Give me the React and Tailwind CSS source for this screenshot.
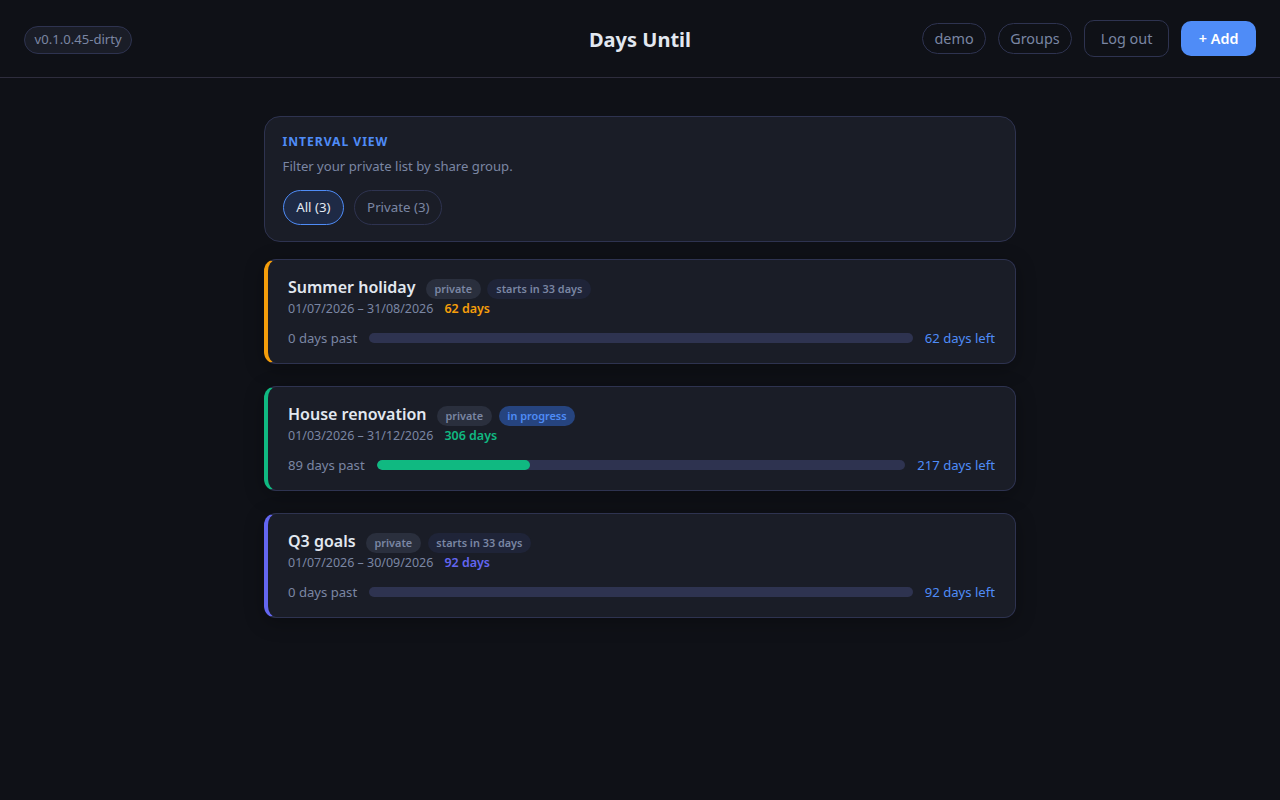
function Tag({ children, tone }) {
  const cls = tone === "private"
    ? "bg-[#2a2f3d] text-[#7a86a3]"
    : tone === "active"
    ? "bg-[#26447f] text-[#4f8cf7]"
    : "bg-[#1f2438] text-[#7a86a3]";
  return <span className={`rounded-full px-[8.8px] h-[19.5px] mt-[4px] flex items-center text-[10.88px] font-semibold leading-none ${cls}`}>{children}</span>;
}
function Card({ title, tags, dates, days, accent, accentText, past, left, pct }) {
  return (
    <div className={`rounded-[12px] border border-[#2e3350] border-l-4 ${accent} bg-[#1a1d27] px-5 pt-[16px] h-[105px] shadow-[0_4px_20px_rgba(0,0,0,0.3)]`}>
      <div className="flex items-center gap-[6.6px] h-[22px]">
        <span className="text-base font-semibold text-[#e2e8f0] leading-[22px] mr-[3.5px]">{title}</span>
        {tags.map((t) => <Tag key={t[0]} tone={t[1]}>{t[0]}</Tag>)}
      </div>
      <div className="flex items-center gap-[11px] text-[12.48px] leading-[18px] mt-[2px] text-[#7a86a3]">
        <span>{dates}</span>
        <span className={`font-semibold ${accentText}`}>{days}</span>
      </div>
      <div className="flex items-center gap-3 mt-[11px] text-[13.12px] leading-[18px]">
        <span className="text-[#7a86a3] whitespace-nowrap">{past}</span>
        <div className="flex-1 h-[10px] rounded-full bg-[#2e3350] overflow-hidden">
          <div className="h-full rounded-full bg-[#10b981]" style={{ width: pct + "%" }} />
        </div>
        <span className="text-[#4f8cf7] whitespace-nowrap">{left}</span>
      </div>
    </div>
  );
}
export default function App() {
  return (
    <div className="min-h-[800px] bg-[#0f1117] font-['Noto_Sans',sans-serif]">
      <header className="h-[78px] border-b border-[#2e2d3d] flex items-center justify-between px-6 relative">
        <span className="rounded-full border border-[#2e3350] bg-[#1a1d27] text-[#7a86a3] text-[13.12px] leading-none px-[9.5px] h-[28px] mt-[2px] flex items-center">v0.1.0.45-dirty</span>
        <h1 className="absolute left-0 right-0 mt-[2px] text-center text-[20px] font-bold text-[#e2e8f0] pointer-events-none">Days Until</h1>
        <div className="flex items-center gap-3">
          <span className="rounded-full border border-[#2e3350] text-[#7a86a3] text-[14.4px] h-[31px] px-[11.6px] flex items-center">demo</span>
          <span className="rounded-full border border-[#2e3350] text-[#7a86a3] text-[14.4px] h-[31px] px-[11px] flex items-center">Groups</span>
          <span className="rounded-[10px] border border-[#2e3350] text-[#7a86a3] text-[14.4px] h-[37px] px-4 flex items-center">Log out</span>
          <span className="rounded-[10px] bg-[#4f8cf7] text-white text-[14.4px] font-semibold h-[35px] px-[17.5px] flex items-center">+ Add</span>
        </div>
      </header>
      <main className="w-[752px] mx-auto pt-[38px] flex flex-col">
        <section className="h-[126px] rounded-[16px] border border-[#2e3350] bg-[#1a1d27] px-[17.6px] pt-[16px] mb-[17px]">
          <div className="text-[12.16px] font-bold tracking-[0.95px] text-[#4f8cf7] leading-[18px]">INTERVAL VIEW</div>
          <p className="text-[13.12px] text-[#7a86a3] leading-[18px] mt-[6px]">Filter your private list by share group.</p>
          <div className="flex gap-[10px] mt-[15px]">
            <span className="h-[35px] rounded-full border border-[#4f8cf7] bg-[#1e2a45] text-[#e2e8f0] text-[13.28px] px-[12.6px] flex items-center">All (3)</span>
            <span className="h-[35px] rounded-full border border-[#2e3350] text-[#7a86a3] text-[13.28px] px-3 flex items-center">Private (3)</span>
          </div>
        </section>
        <div className="flex flex-col gap-[22px]">
          <Card title="Summer holiday" tags={[["private", "private"], ["starts in 33 days", "soon"]]} dates="01/07/2026 – 31/08/2026" days="62 days" accent="border-l-[#f59e0b]" accentText="text-[#f59e0b]" past="0 days past" left="62 days left" pct={0} />
          <Card title="House renovation" tags={[["private", "private"], ["in progress", "active"]]} dates="01/03/2026 – 31/12/2026" days="306 days" accent="border-l-[#10b981]" accentText="text-[#10b981]" past="89 days past" left="217 days left" pct={29} />
          <Card title="Q3 goals" tags={[["private", "private"], ["starts in 33 days", "soon"]]} dates="01/07/2026 – 30/09/2026" days="92 days" accent="border-l-[#6366f1]" accentText="text-[#6366f1]" past="0 days past" left="92 days left" pct={0} />
        </div>
      </main>
    </div>
  );
}
